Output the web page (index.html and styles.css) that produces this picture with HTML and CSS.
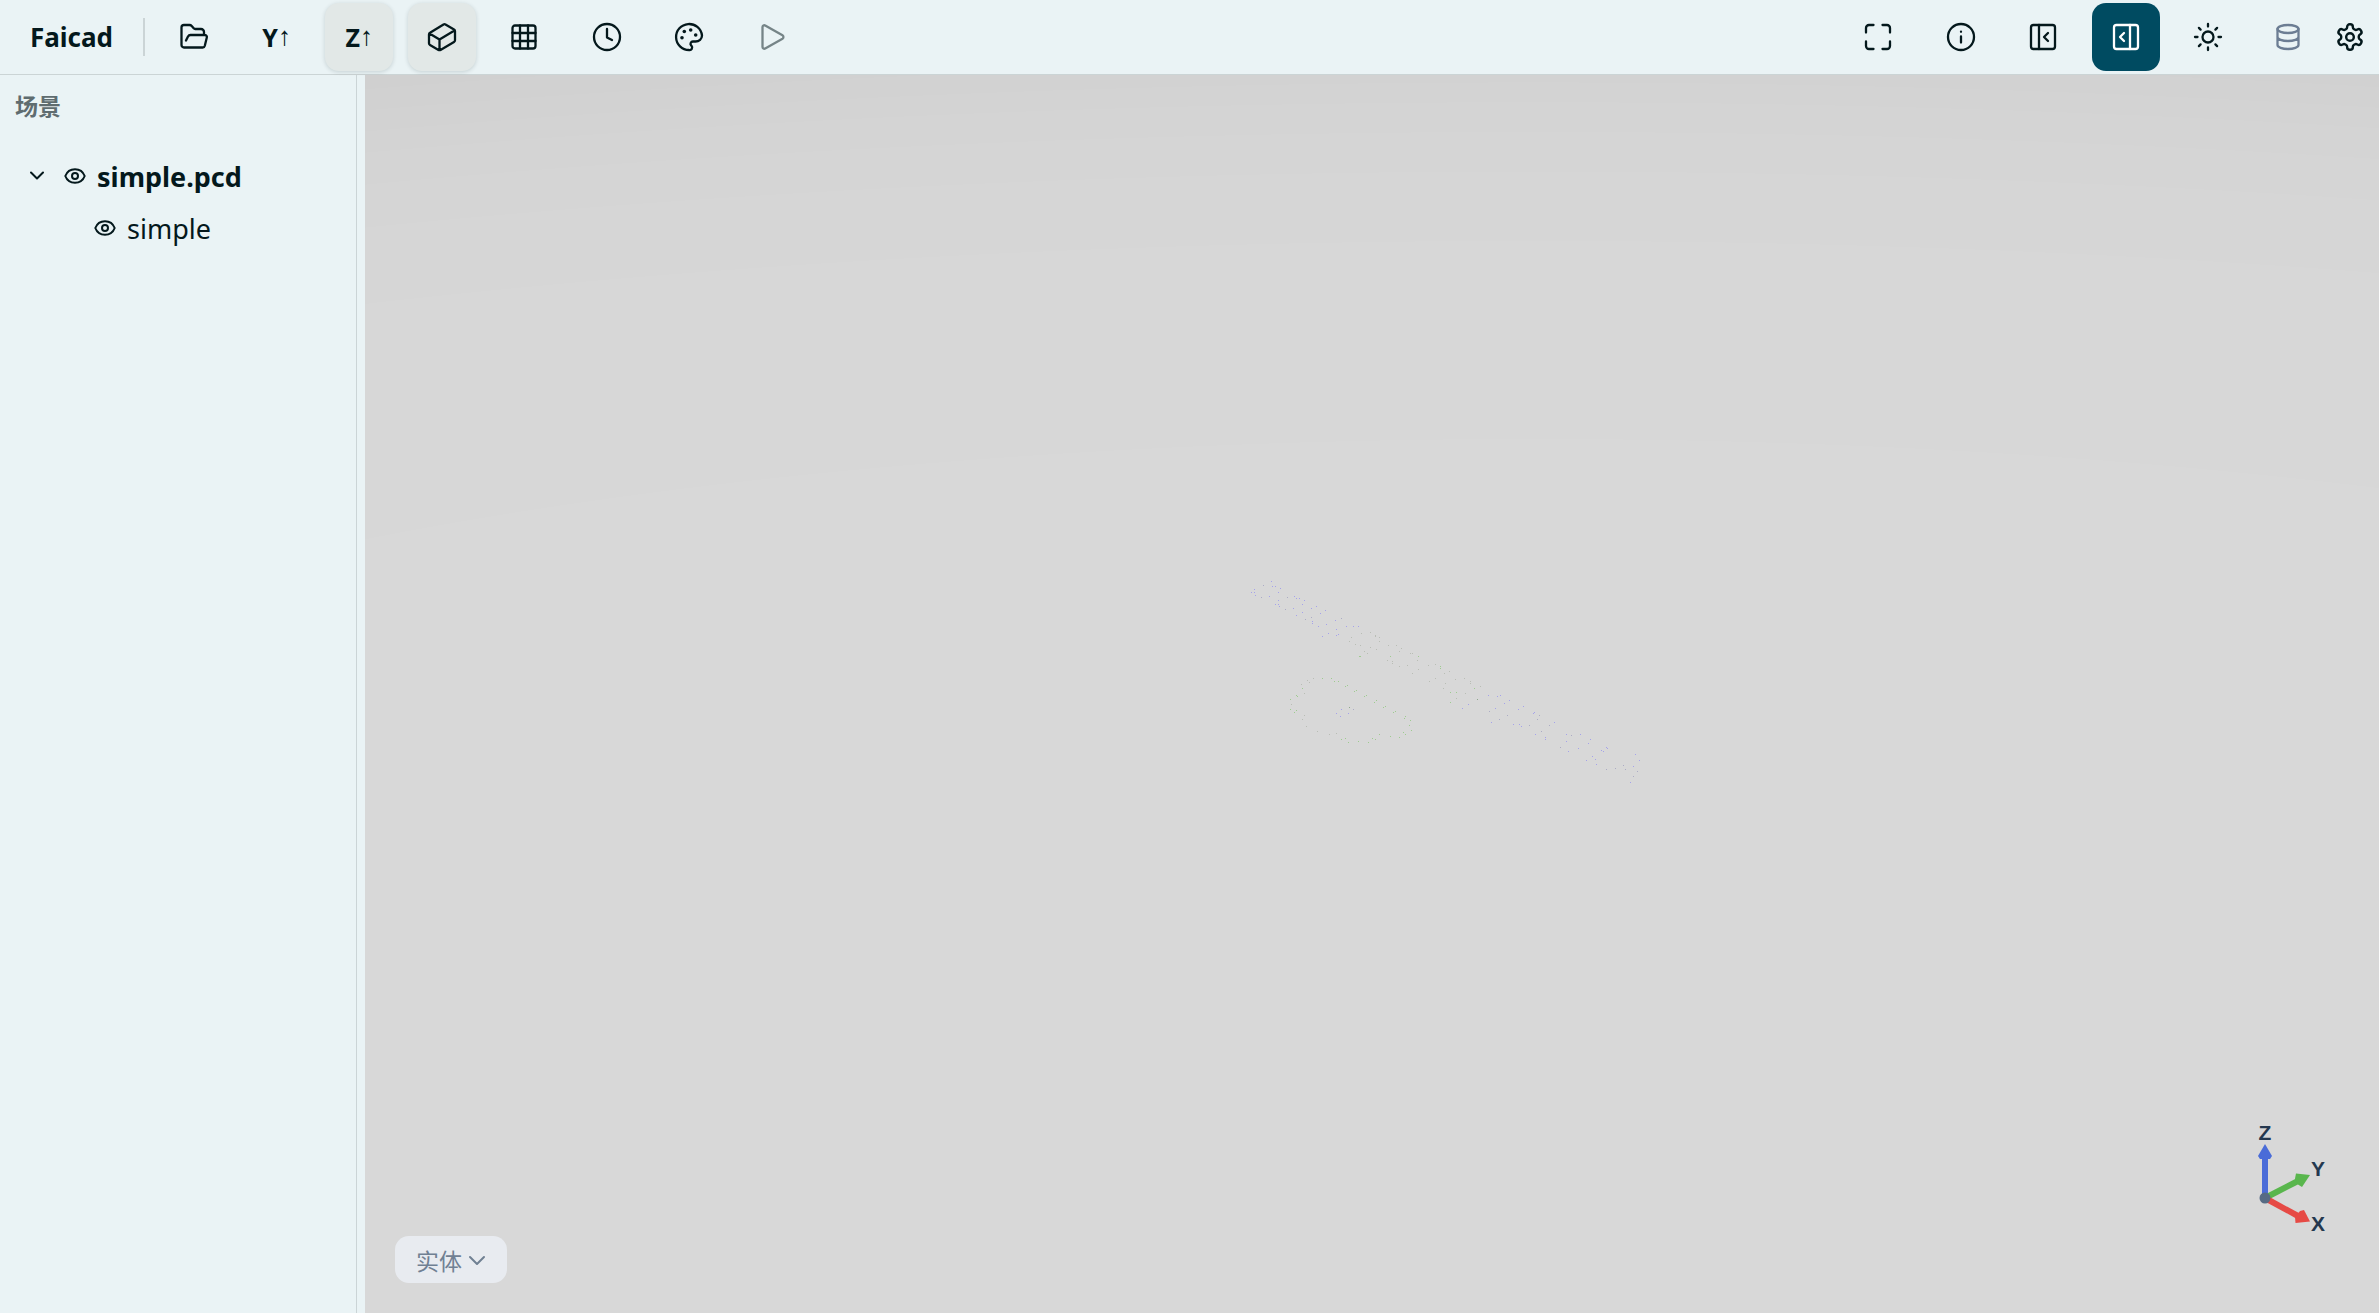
FILE: index.html
```html
<!DOCTYPE html>
<html lang="zh-CN">
<head>
<meta charset="utf-8">
<title>Faicad</title>
<link rel="stylesheet" href="styles.css">
</head>
<body>
<div class="app">
  <header class="toolbar">
    <h1 class="brand">Faicad</h1>
    <div class="divider"></div>
    <div class="group group-main">
      <button class="tool" aria-label="打开文件"><svg class="icon" viewBox="0 0 28 28"><path d="M6 17.500l2-4A3 3 0 0 1 10.500 12H25a2 2 0 0 1 1.800 2.600l-2 8.200A2.300 2.300 0 0 1 22.500 24.500H4a2.500 2.500 0 0 1-2.500-2.500V4.500A2.500 2.500 0 0 1 4 2h5.500a3 3 0 0 1 2.200 1l2 2.300a2 2 0 0 0 1.500.7H21a3 3 0 0 1 3 3v3"/></svg></button>
      <button class="tool">Y<span class="arrow">↑</span></button>
      <button class="tool tool-on">Z<span class="arrow">↑</span></button>
      <button class="tool tool-on" aria-label="视图"><svg class="icon" viewBox="0 0 28 28"><path d="M17.500 1.500l8.500 5a2 2 0 0 1 1 1.700v9a2 2 0 0 1-1 1.700l-13.500 8a2 2 0 0 1-2 0l-8.500-5a2 2 0 0 1-1-1.700V11.500a2 2 0 0 1 1-1.700l13.500-8.300a2 2 0 0 1 2 0zM1.500 10.500l10 6 15-9M11.500 16.500V27"/></svg></button>
      <button class="tool" aria-label="网格"><svg class="icon" viewBox="0 0 28 28"><rect x="2.500" y="2.500" width="23" height="23" rx="2.500"/><path d="M2.500 10h23M2.500 18h23M10 2.500v23M18 2.500v23"/></svg></button>
      <button class="tool" aria-label="历史"><svg class="icon" viewBox="0 0 28 28"><circle cx="14" cy="14" r="13"/><path d="M14 6v8.500l5 2.500"/></svg></button>
      <button class="tool" aria-label="颜色"><svg class="icon" viewBox="0 0 28 28"><path d="M14 27A13 13 0 1 1 27 12.500c0 3.500-3 6-6.500 6H18a2.300 2.300 0 0 0-2 3.700l.5.700A2.500 2.500 0 0 1 14 27z"/><g class="dots"><circle cx="9.300" cy="8.500" r="1.800"/><circle cx="15.700" cy="7" r="1.800"/><circle cx="20.700" cy="12" r="1.800"/><circle cx="7" cy="14.700" r="1.800"/></g></svg></button>
      <button class="tool" aria-label="播放" disabled><svg class="icon" viewBox="0 0 28 28"><path d="M4.500 4a1.800 1.800 0 0 1 2.700-1.500l17.300 9.800a2 2 0 0 1 0 3.400l-17.300 9.800A1.800 1.800 0 0 1 4.500 24z"/></svg></button>
    </div>
    <div class="group group-view">
      <button class="tool" aria-label="全屏"><svg class="icon" viewBox="0 0 28 28"><path d="M9.500 2H5a3 3 0 0 0-3 3v4.500M18.500 2H23a3 3 0 0 1 3 3v4.500M26 18.500V23a3 3 0 0 1-3 3h-4.500M9.500 26H5a3 3 0 0 1-3-3v-4.500"/></svg></button>
      <button class="tool" aria-label="信息"><svg class="icon" viewBox="0 0 28 28"><circle cx="14" cy="14" r="13"/><path d="M14 13.500v6M14 8.700v.1"/></svg></button>
      <button class="tool" aria-label="左侧面板"><svg class="icon" viewBox="0 0 28 28"><rect x="2" y="2" width="24" height="24" rx="2.500"/><path d="M10 2v24M19 10l-4 4 4 4"/></svg></button>
      <button class="tool tool-active" aria-label="右侧面板"><svg class="icon" viewBox="0 0 28 28"><rect x="2" y="2" width="24" height="24" rx="2.500"/><path d="M18 2v24M12 10l-4 4 4 4"/></svg></button>
      <button class="tool" aria-label="主题"><svg class="icon" viewBox="0 0 28 28"><circle cx="14" cy="14" r="5.500"/><path d="M14 1v2.500M14 24.500V27M1 14h2.500M24.500 14H27M4.900 4.900l1.700 1.700M21.400 21.400l1.700 1.700M4.900 23.100l1.700-1.700M21.400 6.600l1.700-1.700"/></svg></button>
    </div>
    <div class="group group-app">
      <button class="mini mini-muted" aria-label="数据"><svg class="icon" viewBox="0 0 28 28"><ellipse cx="14" cy="6" rx="10.500" ry="4"/><path d="M3.500 6v16c0 2.200 4.700 4 10.500 4s10.500-1.800 10.500-4V6M3.500 14c0 2.200 4.700 4 10.500 4s10.500-1.800 10.500-4"/></svg></button>
      <button class="mini" aria-label="设置"><svg class="icon gear" viewBox="1 1 22 22"><path d="M12.220 2h-.440a2 2 0 0 0-2 2v.180a2 2 0 0 1-1 1.730l-.430.250a2 2 0 0 1-2 0l-.150-.080a2 2 0 0 0-2.730.730l-.220.380a2 2 0 0 0 .730 2.730l.150.100a2 2 0 0 1 1 1.720v.510a2 2 0 0 1-1 1.740l-.150.090a2 2 0 0 0-.730 2.730l.220.380a2 2 0 0 0 2.730.730l.150-.080a2 2 0 0 1 2 0l.430.250a2 2 0 0 1 1 1.730V20a2 2 0 0 0 2 2h.440a2 2 0 0 0 2-2v-.180a2 2 0 0 1 1-1.730l.430-.250a2 2 0 0 1 2 0l.150.080a2 2 0 0 0 2.730-.730l.220-.390a2 2 0 0 0-.730-2.730l-.150-.080a2 2 0 0 1-1-1.740v-.500a2 2 0 0 1 1-1.740l.150-.090a2 2 0 0 0 .730-2.730l-.220-.380a2 2 0 0 0-2.730-.730l-.150.080a2 2 0 0 1-2 0l-.430-.250a2 2 0 0 1-1-1.730V4a2 2 0 0 0-2-2z"/><circle cx="12" cy="12" r="3"/></svg></button>
    </div>
  </header>
  <main class="work">
    <aside class="side">
      <h2 class="title">场景</h2>
      <ul class="tree">
        <li>
          <div class="row row-root">
            <svg class="chevron" viewBox="0 0 14 10"><path d="M1 1.500l6 6 6-6"/></svg>
            <svg class="eye" viewBox="0 0 22 16"><path d="M1.300 8C3 3.500 6.500 1.200 11 1.200S19 3.500 20.700 8C19 12.500 15.500 14.800 11 14.800S3 12.500 1.300 8z"/><circle cx="11" cy="8" r="3"/></svg>
            <span>simple.pcd</span>
          </div>
          <ul class="tree-sub">
            <li class="row">
              <svg class="eye" viewBox="0 0 22 16"><path d="M1.300 8C3 3.500 6.500 1.200 11 1.200S19 3.500 20.700 8C19 12.500 15.500 14.800 11 14.800S3 12.500 1.300 8z"/><circle cx="11" cy="8" r="3"/></svg>
              <span>simple</span>
            </li>
          </ul>
        </li>
      </ul>
    </aside>
    <section class="view">
      <canvas class="cloud" width="430" height="230"></canvas>
      <div class="mode">
        <select class="mode-select" aria-label="显示模式"><option>实体</option></select>
        <svg class="mode-chevron" viewBox="0 0 18 12"><path d="M2 2l7 7 7-7"/></svg>
      </div>
      <svg class="gizmo" viewBox="0 0 90 120">
        <path class="axis-z" d="M26 78V32"/><path class="head-z" d="M26 24l7 12-2 3H21l-2-3z"/>
        <path class="axis-y" d="M26 78l33-17"/><path class="head-y" d="M71 55L57 53.500l-1 5 3 6 4 2.500z"/>
        <path class="axis-x" d="M26 78l33 18"/><path class="head-x" d="M71 101.500L65 90l-4 1-5 6 .500 6z"/>
        <circle class="hub" cx="26" cy="78" r="5.500"/>
        <text x="26" y="20">Z</text><text x="79" y="56">Y</text><text x="79" y="111">X</text>
      </svg>
    </section>
  </main>
</div>
<script src="cloud.js"></script>
</body>
</html>
```
FILE: styles.css
```css
* { box-sizing: border-box; }
body { margin: 0; font-family: "Noto Sans", "Noto Sans CJK SC", sans-serif; color: #04181c; }
.app { min-height: 100vh; display: flex; flex-direction: column; background: #eaf3f5; }

.toolbar { display: flex; align-items: center; height: 75px; padding: 0 14px 0 30px; border-bottom: 1px solid #cbd4d5; }
.brand { margin: 0 30px 0 0; font-size: 26px; line-height: 36px; }
.divider { width: 2px; height: 38px; margin-right: 15px; background: #cbd4d6; }
.group { display: flex; align-items: center; justify-content: space-between; }
.group-main { width: 646px; }
.group-view { width: 398px; margin-left: auto; }
.group-app { width: 92px; margin-left: 31px; }
.tool, .mini { display: flex; align-items: center; justify-content: center; padding: 0; border: 0; background: none; color: inherit; font: 700 25px/32px "Noto Sans", sans-serif; }
.tool { width: 68px; height: 68px; border-radius: 14px; }
.tool:disabled { opacity: .5; }
.tool-on { background: #e2e8e7; box-shadow: 0 1px 4px rgba(0, 30, 35, .16); }
.tool-active { background: #004b61; color: #fff; }
.mini { width: 30px; height: 40px; }
.mini-muted { color: #6c7d93; }
.arrow { font: 400 26px/32px "Liberation Serif", serif; }
.icon { width: 28px; height: 28px; overflow: visible; }
.icon, .eye, .chevron, .mode-chevron { fill: none; stroke: currentColor; stroke-width: 2; stroke-linecap: round; stroke-linejoin: round; }
.icon { stroke-width: 2.3; }
.icon.gear { stroke-width: 1.9; }
.icon .dots { fill: currentColor; stroke: none; }

.work { flex: 1; display: flex; }
.side { width: 357px; border-right: 1px solid #cbd4d6; }
.title { margin: 14px 15px 27px; font-size: 23px; line-height: 34px; color: #5f6c70; }
.tree, .tree-sub { list-style: none; margin: 0; padding: 0; }
.tree { padding-left: 30px; font-size: 27px; }
.tree-sub { padding-left: 64px; }
.row { display: flex; align-items: center; height: 52px; }
.row-root { font-weight: 700; }
.chevron { width: 14px; height: 10px; margin-right: 20px; }
.eye { width: 22px; height: 16px; margin-right: 11px; }

.view {
  position: relative;
  flex: 1;
  margin-left: 8px;
  background:
    linear-gradient(transparent 63%, #d8d8d8 63%),
    radial-gradient(ellipse 212% 80% at 58% 63%, #d8d8d8 42%, #d7d7d7 42% 62%, #d6d6d6 62% 69%, #d5d5d5 69% 73%, #d4d4d4 73% 76%, #d3d3d3 76% 78%, #d2d2d2 78% 80%, #d1d1d1 80% 82%, #d0d0d0 82%);
}
.cloud { position: absolute; left: calc(50% - 142px); top: calc(50% - 134px); }
.mode { position: absolute; left: 30px; bottom: 30px; }
.mode-select { display: block; width: 112px; height: 47px; padding: 0 0 0 21px; border: 0; border-radius: 14px; appearance: none; background: #e8ebf0; color: #708093; font: 400 23px/34px "Noto Sans CJK SC", sans-serif; }
.mode-chevron { position: absolute; right: 21px; top: 19px; width: 18px; height: 12px; color: #708093; pointer-events: none; }
.gizmo { position: absolute; right: 50px; bottom: 73px; width: 90px; height: 120px; font: 700 21px "Liberation Sans", sans-serif; fill: #24384f; text-anchor: middle; }
.axis-x, .axis-y, .axis-z { stroke-width: 6; }
.axis-x { stroke: #e64a45; }
.axis-y { stroke: #59b64d; }
.axis-z { stroke: #4a6cd8; }
.head-x { fill: #e64a45; }
.head-y { fill: #59b64d; }
.head-z { fill: #4a6cd8; }
.hub { fill: #566b84; }
```
FILE: cloud.js
```js
// Point cloud samples in scan units, three units to a pixel: x, y pairs per colour.
const SCALE = 3;
const layers = {
  '#a5a2ea': [
    124,64, 127,79, 136,79, 151,85, 145,97, 73,88, 64,97, 73,97, 76,106, 118,109, 145,121, 136,133, 145,133, 148,139,
    193,109, 199,115, 208,115, 223,121, 217,133, 190,145, 217,157, 199,166, 244,145, 259,139, 271,160, 286,151,
    247,184, 247,190, 265,199, 289,193, 316,181, 319,208, 295,220, 319,226, 325,223, 277,229, 349,199, 370,199, 385,199,
    319,460, 334,448, 331,469, 355,460, 697,445, 715,433, 775,406, 802,409, 811,406, 838,421, 823,430, 796,445,
    784,487, 850,493, 868,493, 874,499, 865,448, 880,439, 910,460, 913,457, 973,487, 916,523, 946,532, 946,538,
    1009,523, 1009,544, 1051,523, 1081,538, 1075,550, 1045,565, 1015,574, 1114,571, 1120,574, 1129,562, 1132,565,
    1069,601, 1087,589, 1096,598, 1099,613, 1216,583, 1228,601, 1210,619, 1201,667
  ],
  '#acacc4': [
    100,76, 94,112, 172,112, 166,148, 226,178, 244,172, 334,175, 778,454, 808,478, 832,466, 898,496, 922,478,
    928,466, 934,514, 958,496, 991,562, 1024,526, 1129,628, 1156,625, 1180,616, 1186,628, 1222,634, 1210,649,
    370,448
  ],
  '#b9bdb5': [
    364,232, 358,244, 376,253, 391,256, 394,220, 421,217, 436,226, 436,229, 448,232, 448,244, 421,262, 439,268,
    403,274, 412,280, 475,256, 499,256, 514,265, 508,274, 541,280, 547,280, 472,301, 487,304, 487,310, 508,319,
    532,316, 562,301, 565,328, 547,340, 595,316, 616,313, 643,340, 658,334, 616,355, 598,364, 646,370, 640,385,
    676,358, 703,355, 721,364, 721,370, 751,379, 706,400, 679,415, 184,433, 214,373, 232,361, 238,367, 250,355,
    223,400, 223,466, 217,478, 229,499, 262,514, 298,523, 319,520
  ],
  '#9ecb90': [
    388,289, 391,289, 481,289, 565,289, 631,319, 631,325, 661,397, 679,397, 733,385, 661,427, 217,385, 199,406,
    202,409, 181,418, 181,448, 193,457, 199,451, 277,355, 304,355, 313,364, 325,364, 346,379, 352,376, 373,394,
    379,391, 403,409, 409,406, 433,427, 439,421, 460,442, 466,439, 490,457, 496,454, 523,475, 526,469, 541,481,
    538,496, 544,511, 520,517, 526,523, 508,532, 481,529, 448,523, 436,538, 427,535, 415,547, 385,544, 355,547,
    346,535, 334,538
  ],
  '#8fa88c': [358,442, 742,418]
};

const ctx = document.querySelector('.cloud').getContext('2d');
for (const [color, points] of Object.entries(layers)) {
  ctx.fillStyle = color;
  for (let i = 0; i < points.length; i += 2) {
    ctx.fillRect(Math.floor(points[i] / SCALE), Math.floor(points[i + 1] / SCALE), 1, 1);
  }
}
```
